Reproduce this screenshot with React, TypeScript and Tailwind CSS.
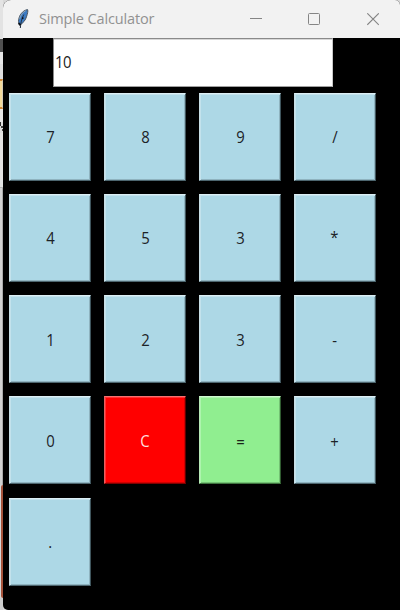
import React from "react";

type Key = { label: string; tone?: "red" | "green"; shift?: string };

const keys: Key[] = [
  { label: "7" }, { label: "8" }, { label: "9" }, { label: "/", shift: "-translate-x-px" },
  { label: "4" }, { label: "5" }, { label: "3" }, { label: "*", shift: "-translate-x-px -translate-y-px" },
  { label: "1" }, { label: "2" }, { label: "3" }, { label: "-", shift: "-translate-x-px" },
  { label: "0" }, { label: "C", tone: "red" }, { label: "=", tone: "green", shift: "translate-y-px" }, { label: "+", shift: "-translate-x-px translate-y-px" },
  { label: "." },
];

const tones = {
  blue: "bg-[#add8e6] text-[#1c2226] border-t-[#dceff5] border-l-[#c9dfe6] border-r-[#3f555d] border-b-[#4d666f] shadow-[inset_1px_1px_0_#c3e2ec,inset_-1px_-1px_0_#8fb3bf]",
  red: "bg-[#ff0000] text-[#ffdede] border-t-[#f87070] border-l-[#e86060] border-r-[#5c0000] border-b-[#800000] shadow-[inset_1px_1px_0_#ff3030,inset_-1px_-1px_0_#d00000]",
  green: "bg-[#90ee90] text-[#1a241a] border-t-[#cffacf] border-l-[#b8e8b8] border-r-[#2f5a2f] border-b-[#3f743f] shadow-[inset_1px_1px_0_#aef4ae,inset_-1px_-1px_0_#74c274]",
};

function CalcButton({ label, tone, shift = "" }: Key) {
  return (
    <button
      className={`flex h-[88px] w-[82px] items-center justify-center border pt-px pl-px text-base leading-5 ${tones[tone ?? "blue"]}`}
    >
      <span className={`scale-x-[0.93] ${shift}`}>{label}</span>
    </button>
  );
}

function Feather() {
  return (
    <svg className="h-[22px] w-[14px] shrink-0" viewBox="0 0 14 22" fill="none">
      <path d="M11.6 1.6C8 2 4.2 5.6 3.1 9.8C2.3 12.6 2.3 14.6 3.3 17C6.8 15.8 9.7 12 10.7 8.2C11.4 5.6 12.3 3.2 11.6 1.6Z" fill="#3d7cc4" stroke="#4d5660" strokeWidth="1" />
      <path d="M9.8 2.6C6.8 4.2 4.5 7.2 3.7 10.8" stroke="#8fa5b8" strokeWidth="1" />
      <path d="M7.8 6.6C6.1 10 4.9 13.5 4.3 20" stroke="#1b2c40" strokeWidth="1" />
      <path d="M6.4 9.4L7 10.8M2.7 15L4.6 17.4" stroke="#0c1118" strokeWidth="1.7" />
    </svg>
  );
}

function BackgroundEdge() {
  return (
    <div className="flex h-full w-[3px] shrink-0 flex-col overflow-hidden bg-[#d8d8d8]">
      <div className="h-[39px] bg-[#e3e3e3]" />
      <div className="h-[13px] bg-[#505050]" />
      <div className="h-[12px] bg-[#e6e6e6]" />
      <div className="h-[15px] bg-[#dedede]" />
      <div className="h-[30px] border-y-2 border-r border-[#cf8737] border-r-[#d5cbb8] bg-[#f2d99a]" />
      <div className="h-[13px] bg-[#e8e8e8]" />
      <div className="flex h-[11px] flex-col bg-[#dddddd]">
        <div className="h-1 w-px bg-[#333333]" />
        <div className="ml-px h-[2px] w-[2px] bg-[#444444]" />
        <div className="ml-[2px] mt-px h-[2px] w-px bg-[#444444]" />
      </div>
      <div className="h-[55px] border-b border-[#b5b5b5] bg-[#e2e2e2]" />
      <div className="h-[297px] border-r border-[#aaaaaa] bg-[#d2d2d2]" />
      <div className="ml-px h-[113px] rounded-l-[3px] bg-[#a5533b]" />
      <div className="flex-1 bg-[#cdcdcd]" />
    </div>
  );
}

export default function App() {
  return (
    <div className="flex h-[610px] w-[400px] overflow-hidden bg-[#d8d8d8] font-['Open_Sans','Noto_Sans',sans-serif]">
      <BackgroundEdge />
      <main className="flex h-full w-[397px] flex-col overflow-hidden rounded-tl-[8px] rounded-tr-[5px] rounded-bl-[5px] bg-black">
        <header className="flex h-[38px] shrink-0 items-center bg-[#f2f2f2] pl-[13px] text-[#919191]">
          <Feather />
          <h1 className="ml-[9px] w-[116px] whitespace-nowrap text-[14.5px] leading-5 tracking-[-0.14px]">Simple Calculator</h1>
          <div className="ml-auto flex items-center pr-[20px]">
            <svg width="13" height="13" viewBox="0 0 13 13" fill="none" stroke="#858585"><path d="M0 5.5h12" /></svg>
            <svg className="ml-[45px]" width="13" height="13" viewBox="0 0 13 13" fill="none" stroke="#858585"><rect x=".5" y=".5" width="11" height="11" rx="1" /></svg>
            <svg className="ml-[46px]" width="13" height="13" viewBox="0 0 13 13" fill="none" stroke="#858585" strokeWidth="1.1"><path d="M.3.3l11.5 11.5M11.8.3L.3 11.8" /></svg>
          </div>
        </header>
        <div className="ml-[50px] flex h-[49px] w-[280px] shrink-0 items-center border border-t-[#8a8a8a] border-r-[#c8c8c8] border-b-[#a0a0a0] border-l-[#8a8a8a] bg-white pb-px pl-px text-base leading-5 tracking-[-0.6px] text-[#202020] shadow-[inset_0_1px_0_#d8d8d8]">
          <span className="origin-left scale-x-[0.93]">10</span>
        </div>
        <div className="mt-[5.6px] ml-[6px] grid auto-rows-[101.25px] grid-cols-[repeat(4,95px)]">
          {keys.map((k, i) => <CalcButton key={i} {...k} />)}
        </div>
      </main>
    </div>
  );
}
